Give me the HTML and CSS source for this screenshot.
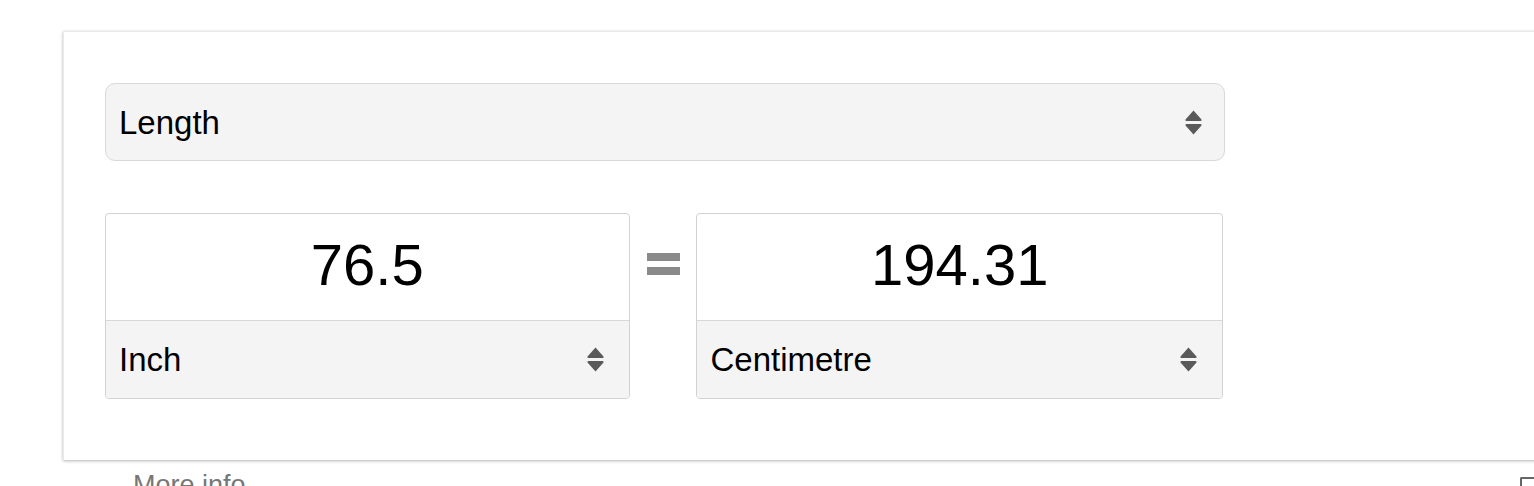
FILE: index.html
```html
<!DOCTYPE html>
<html lang="en">
<head>
<meta charset="utf-8">
<title>Unit converter</title>
<link rel="stylesheet" href="styles.css">
</head>
<body>
<div class="page">
  <div class="card">
    <div class="select select-wide">
      <span class="select-label">Length</span>
      <svg class="sort-icon" viewBox="0 0 17 25" aria-hidden="true"><path d="M8.5 0.5 L16.5 9.5 Q17 11 15.5 11 L1.5 11 Q0 11 0.5 9.5 Z M1.5 14 L15.5 14 Q17 14 16.5 15.5 L8.5 24.5 L0.5 15.5 Q0 14 1.5 14 Z"/></svg>
    </div>
    <div class="converter">
      <div class="unit-box">
        <div class="value">76.5</div>
        <div class="select select-unit">
          <span class="select-label">Inch</span>
          <svg class="sort-icon" viewBox="0 0 17 25" aria-hidden="true"><path d="M8.5 0.5 L16.5 9.5 Q17 11 15.5 11 L1.5 11 Q0 11 0.5 9.5 Z M1.5 14 L15.5 14 Q17 14 16.5 15.5 L8.5 24.5 L0.5 15.5 Q0 14 1.5 14 Z"/></svg>
        </div>
      </div>
      <div class="equals" aria-label="equals"><span class="bar"></span><span class="bar"></span></div>
      <div class="unit-box unit-box-right">
        <div class="value">194.31</div>
        <div class="select select-unit">
          <span class="select-label">Centimetre</span>
          <svg class="sort-icon" viewBox="0 0 17 25" aria-hidden="true"><path d="M8.5 0.5 L16.5 9.5 Q17 11 15.5 11 L1.5 11 Q0 11 0.5 9.5 Z M1.5 14 L15.5 14 Q17 14 16.5 15.5 L8.5 24.5 L0.5 15.5 Q0 14 1.5 14 Z"/></svg>
        </div>
      </div>
    </div>
  </div>
  <div class="footer">
    <span class="more-info">More info</span>
    <span class="feedback-icon" aria-hidden="true"></span>
  </div>
</div>
</body>
</html>
```
FILE: styles.css
```css
html, body {
  margin: 0;
  padding: 0;
  background: #ffffff;
  overflow: hidden;
  height: 486px;
}
body {
  font-family: "Liberation Sans", Arial, Helvetica, sans-serif;
  color: #000;
}
.page {
  padding: 31px 0 0 63px;
  width: 1490px;
}
.card {
  box-sizing: border-box;
  width: 1490px;
  border: 1px solid #e9e9e9;
  border-bottom: none;
  border-right: none;
  box-shadow: 0 1px 3px rgba(0, 0, 0, 0.3);
  padding: 51px 0 61px 41px;
  background: #fff;
  display: flex;
  flex-direction: column;
  gap: 52px;
}
.select {
  box-sizing: border-box;
  display: flex;
  align-items: center;
  justify-content: space-between;
  background: #f4f4f4;
  height: 78px;
}
.select-wide {
  width: 1120px;
  border: 1px solid #d8d8d8;
  border-radius: 10px;
  padding: 0 22px 0 13px;
}
.select-label {
  font-size: 33px;
  line-height: 1;
}
.sort-icon {
  width: 17px;
  height: 25px;
  fill: #5a5a5a;
  flex: none;
}
.converter {
  display: flex;
  align-items: stretch;
  width: 1118px;
}
.unit-box {
  box-sizing: border-box;
  width: 525px;
  border: 1px solid #d2d2d2;
  border-radius: 4px;
  display: flex;
  flex-direction: column;
  overflow: hidden;
}
.unit-box-right {
  width: 527px;
}
.value {
  height: 107px;
  display: flex;
  align-items: center;
  justify-content: center;
  font-size: 58px;
  line-height: 1;
  padding-bottom: 4px;
  box-sizing: border-box;
  border-bottom: 1px solid #d8d8d8;
}
.select-unit {
  height: 77px;
  padding: 0 25px 0 13px;
}
.equals {
  width: 67px;
  display: flex;
  flex-direction: column;
  align-items: center;
  justify-content: flex-start;
  padding-top: 40px;
  gap: 6px;
}
.bar {
  display: block;
  width: 33px;
  height: 8px;
  background: #8a8a8a;
}
.footer {
  box-sizing: border-box;
  display: flex;
  justify-content: space-between;
  align-items: flex-start;
  padding: 9px 0 0 70px;
  width: 1473px;
}
.more-info {
  font-size: 27px;
  color: #777;
  line-height: 32px;
}
.feedback-icon {
  display: block;
  width: 14px;
  height: 14px;
  margin-top: 8px;
  border-top: 2px solid #666;
  border-left: 2px solid #666;
  border-radius: 2px 0 0 0;
}
```
